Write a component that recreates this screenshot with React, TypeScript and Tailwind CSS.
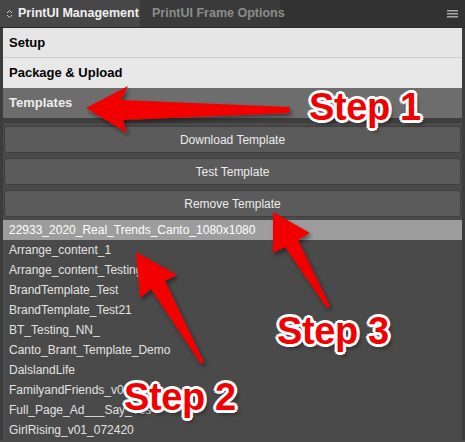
import React from "react";

const templates = [
  "22933_2020_Real_Trends_Canto_1080x1080",
  "Arrange_content_1",
  "Arrange_content_Testing",
  "BrandTemplate_Test",
  "BrandTemplate_Test21",
  "BT_Testing_NN_",
  "Canto_Brant_Template_Demo",
  "DalslandLife",
  "FamilyandFriends_v01",
  "Full_Page_Ad___Say_Yes",
  "GirlRising_v01_072420",
];

const stepCls =
  "absolute whitespace-nowrap font-['Liberation_Sans',Arial,sans-serif] font-bold text-[38px] leading-none tracking-[-0.4px] text-[#f20000] [text-shadow:3px_0_#fff,-3px_0_#fff,0_3px_#fff,0_-3px_#fff,2px_2px_#fff,-2px_2px_#fff,2px_-2px_#fff,-2px_-2px_#fff,3px_4px_4px_rgba(0,0,0,0.45)]";

const App: React.FC = () => {
  return (
    <div className="relative w-[465px] h-[442px] overflow-hidden bg-[#4a4a4a] font-['Liberation_Sans',Arial,sans-serif]">
      {/* Tab bar */}
      <div className="flex h-[28px] bg-[#323232] border-b border-[#2a2a2a]">
        <div className="w-[140px] flex items-center gap-[5px] pl-[6px] bg-[#474747] text-[#f0f0f0] text-[12.5px] font-bold whitespace-nowrap">
          <svg width="7" height="10" viewBox="0 0 7 10" fill="none" stroke="#c8c8c8" strokeWidth="1">
            <path d="M1 4 L3.5 1.5 L6 4" />
            <path d="M1 6 L3.5 8.5 L6 6" />
          </svg>
          <span>PrintUI Management</span>
        </div>
        <div className="w-[140px] flex items-center pl-[12px] bg-[#3a3a3a] text-[#8c8c8c] text-[12.5px] font-bold whitespace-nowrap">
          PrintUI Frame Options
        </div>
        <div className="flex-1 flex items-center justify-end pr-[7px]">
          <svg width="11" height="8" viewBox="0 0 11 8" fill="#a8a8a8">
            <rect x="0" y="0" width="11" height="1.5" />
            <rect x="0" y="3" width="11" height="1.5" />
            <rect x="0" y="6" width="11" height="1.5" />
          </svg>
        </div>
      </div>

      <div className="border-l-[3px] border-r-[3px] border-[#3c3c3c]">
        {/* Section headers */}
        <div className="h-[30px] flex items-center pl-[6px] bg-[#e6e6e6] border-b border-[#cdcdcd] text-[13px] font-bold text-black">
          Setup
        </div>
        <div className="h-[30px] flex items-center pl-[6px] bg-[#e8e8e8] text-[13px] font-bold text-black">
          Package &amp; Upload
        </div>
        <div className="h-[30px] flex items-center pl-[6px] bg-[#6d6d6d] text-[13px] font-bold text-[#eeeeee]">
          Templates
        </div>
        <div className="h-[5px] bg-[#3e3e3e]" />

        {/* Buttons */}
        <div className="flex flex-col gap-[5px] px-[1px] pt-[3px]">
          {["Download Template", "Test Template", "Remove Template"].map(label => (
            <button
              key={label}
              className="h-[27px] rounded-[3px] bg-[#5b5b5b] border border-[#3f3f3f] text-[#ececec] text-[12px]"
            >
              {label}
            </button>
          ))}
        </div>

        {/* Template list */}
        <ul className="mt-[3px]">
          {templates.map((t, i) => (
            <li
              key={t}
              className={`h-[20px] flex items-center pl-[6px] text-[12px] whitespace-nowrap ${
                i === 0 ? "bg-[#9d9d9d] text-white" : "text-[#e2e2e2]"
              }`}
            >
              {t}
            </li>
          ))}
        </ul>
      </div>

      {/* Annotation arrows */}
      <svg className="absolute inset-0 pointer-events-none" width="465" height="442">
        <defs>
          <filter id="sh" x="-20%" y="-20%" width="140%" height="140%">
            <feDropShadow dx="2" dy="3" stdDeviation="2" floodColor="#000" floodOpacity="0.45" />
          </filter>
        </defs>
        <g fill="#f20000" filter="url(#sh)">
          <polygon points="86,108 128,86 121,100 290,107 289,113 123,120 127,133" />
          <polygon points="136,252 177,275 165,281 204,362 201,364 151,289 140,298" />
          <polygon points="273,212 310,233 298,240 330,306 327,308 285,247 273,253" />
        </g>
      </svg>

      <div className={stepCls} style={{ left: 309, top: 88 }}>Step 1</div>
      <div className={stepCls} style={{ left: 277, top: 312 }}>Step 3</div>
      <div className={stepCls} style={{ left: 124, top: 378 }}>Step 2</div>
    </div>
  );
};

export default App;
